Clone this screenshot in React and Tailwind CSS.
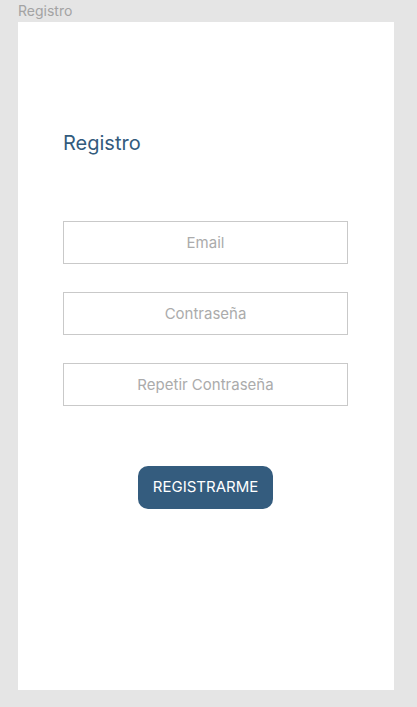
export default function App() {
  const fields = ['Email', 'Contraseña', 'Repetir Contraseña'];

  return (
    <div className="min-h-[707px] bg-[#e5e5e5] font-['Inter','Liberation_Sans',sans-serif]">
      {/* etiqueta del frame */}
      <div className="h-[22px] pl-[18px] text-[14px] leading-[22px] text-[#a3a3a3]">Registro</div>

      <div className="ml-[18px] h-[668px] w-[376px] bg-white px-[45px] pt-[109px]">
        <h1 className="text-[20px] leading-[24px] font-normal text-[#335b7d]">Registro</h1>

        <div className="mt-[66px] flex flex-col gap-[28px]">
          {fields.map((f) => (
            <input
              key={f}
              placeholder={f}
              className="h-[43px] w-[285px] border border-[#c9c9c9] bg-white text-center text-[15px] text-[#555] placeholder:text-[#ababab] outline-none"
            />
          ))}
        </div>

        <div className="mt-[60px] flex w-[285px] justify-center">
          <button className="h-[43px] w-[135px] rounded-[10px] bg-[#345c7e] text-[15px] text-white">
            REGISTRARME
          </button>
        </div>
      </div>
    </div>
  );
}
